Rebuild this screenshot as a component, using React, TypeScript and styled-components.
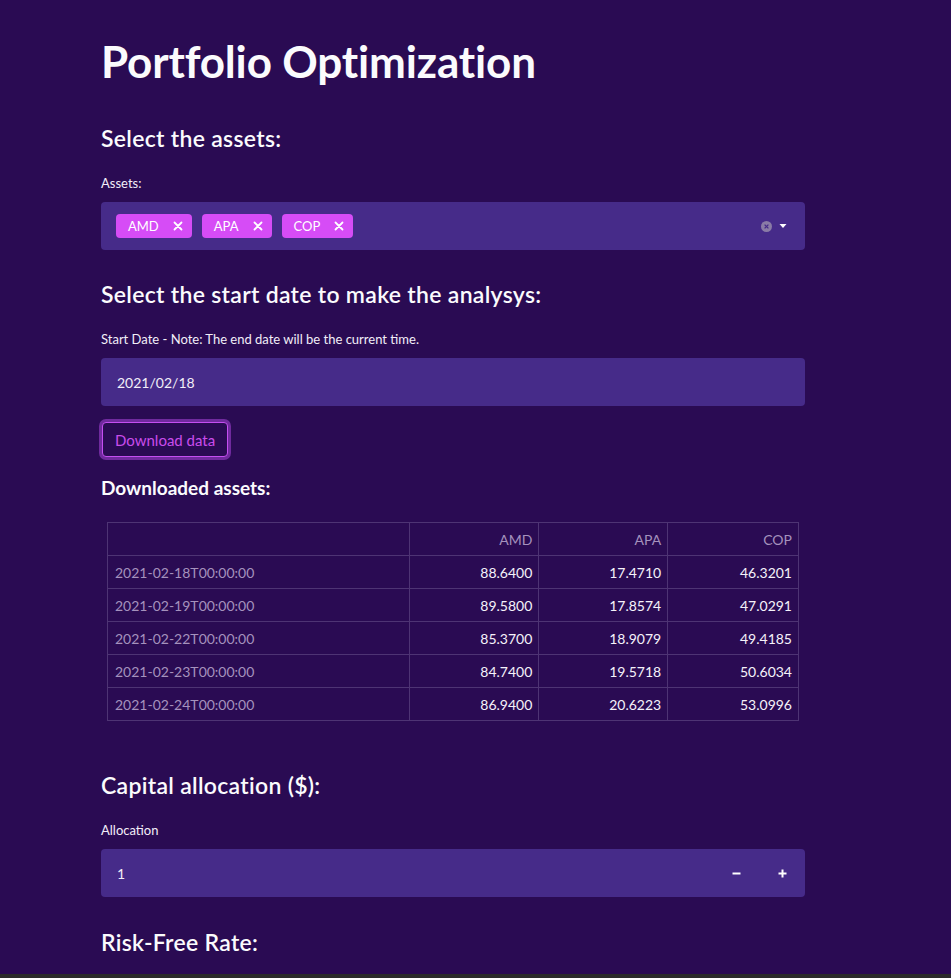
import React from "react";
import styled, { createGlobalStyle } from "styled-components";

const GlobalStyle = createGlobalStyle`
  html, body { margin: 0; padding: 0; background: #2a0b53; }
  body { font-family: Lato, "Noto Sans", sans-serif; color: #fafafa; }
  * { box-sizing: border-box; }
`;

const Page = styled.div`
  height: 100vh;
  display: flex;
  flex-direction: column;
  overflow: hidden;
  background: #2a0b53;
`;

const Main = styled.main`
  flex: 1;
  overflow: hidden;
  padding-left: 101px;
`;

const Block = styled.div`
  width: 704px;
  display: flex;
  flex-direction: column;
`;

const BottomStrip = styled.div`
  height: 4px;
  flex: none;
  background: #2b2b2b;
`;

const Title = styled.h1`
  margin: 33px 0 0;
  font-size: 44px;
  line-height: 56px;
  font-weight: 700;
  letter-spacing: -0.15px;
  color: #fbfbfd;
`;

const Heading = styled.h3<{ $top: number }>`
  margin: ${(p) => p.$top}px 0 0;
  font-size: 23px;
  line-height: 30px;
  font-weight: 600;
  letter-spacing: 0.3px;
  color: #fbfbfd;
`;

const SubHeading = styled.h4<{ $top: number }>`
  margin: ${(p) => p.$top}px 0 0;
  font-size: 19px;
  line-height: 26px;
  font-weight: 700;
  color: #fbfbfd;
`;

const Label = styled.label<{ $top: number }>`
  display: block;
  margin: ${(p) => p.$top}px 0 0;
  font-size: 13px;
  line-height: 18px;
  color: #f2eef8;
`;

const Field = styled.div<{ $top: number }>`
  margin-top: ${(p) => p.$top}px;
  height: 48px;
  border-radius: 4px;
  background: #462b89;
  display: flex;
  align-items: center;
  padding: 0 16px;
  font-size: 14px;
  color: #f2eef8;
`;

const Tags = styled.div`
  display: flex;
  gap: 10px;
  flex: 1;
  margin-left: -1px;
`;

const Tag = styled.span`
  height: 24px;
  display: inline-flex;
  align-items: center;
  gap: 14px;
  padding: 0 9px 0 12px;
  background: #d64cf6;
  border-radius: 4px;
  font-size: 13px;
  color: #ffffff;
`;

const Controls = styled.div`
  display: flex;
  align-items: center;
  gap: 7px;
  margin-right: 2px;
`;

const Value = styled.span`
  flex: 1;
`;

const Stepper = styled.div`
  display: flex;
  align-items: center;
  gap: 37px;
  margin-right: 2px;
`;

const Button = styled.button`
  margin-top: 16px;
  align-self: flex-start;
  height: 35px;
  padding: 0 12px;
  background: #2a0b53;
  border: 1px solid #c44ff0;
  border-radius: 4px;
  box-shadow: 0 0 0 3px rgba(170, 70, 220, 0.55);
  color: #c94ceb;
  font-family: Lato, sans-serif;
  font-size: 15px;
  margin-left: 1px;
`;

const Table = styled.table<{ $top: number }>`
  margin: ${(p) => p.$top}px 0 0 6px;
  width: 692px;
  border-collapse: collapse;
  font-size: 14px;
`;

const Col = styled.col<{ $w: number }>`
  width: ${(p) => p.$w}px;
`;

const Cell = styled.td<{ $head?: boolean; $index?: boolean }>`
  height: 33px;
  padding: 0 6px 0 7px;
  border: 1px solid #4e3474;
  text-align: ${(p) => (p.$index ? "left" : "right")};
  color: ${(p) => (p.$head || p.$index ? "#a592bd" : "#f5f2fa")};
  font-weight: 400;
  white-space: nowrap;
`;

const X = () => (
  <svg width="10" height="10" viewBox="0 0 10 10">
    <path d="M1.5 1.5 L8.5 8.5 M8.5 1.5 L1.5 8.5" stroke="#fff" strokeWidth="1.8" strokeLinecap="round" />
  </svg>
);

const ClearIcon = () => (
  <svg width="11" height="11" viewBox="0 0 11 11">
    <circle cx="5.5" cy="5.5" r="5.5" fill="#8a7ba6" />
    <path d="M3.6 3.6 L7.4 7.4 M7.4 3.6 L3.6 7.4" stroke="#462b89" strokeWidth="1.3" />
  </svg>
);

const Caret = () => (
  <svg width="8" height="6" viewBox="0 0 8 6">
    <path d="M0.5 1 L7.5 1 L4 5 Z" fill="#fff" />
  </svg>
);

const Minus = () => (
  <svg width="9" height="9" viewBox="0 0 9 9">
    <path d="M0.5 4.5 H8.5" stroke="#fff" strokeWidth="2" />
  </svg>
);

const Plus = () => (
  <svg width="9" height="9" viewBox="0 0 9 9">
    <path d="M0.5 4.5 H8.5 M4.5 0.5 V8.5" stroke="#fff" strokeWidth="2" />
  </svg>
);

const rows: [string, string, string, string][] = [
  ["2021-02-18T00:00:00", "88.6400", "17.4710", "46.3201"],
  ["2021-02-19T00:00:00", "89.5800", "17.8574", "47.0291"],
  ["2021-02-22T00:00:00", "85.3700", "18.9079", "49.4185"],
  ["2021-02-23T00:00:00", "84.7400", "19.5718", "50.6034"],
  ["2021-02-24T00:00:00", "86.9400", "20.6223", "53.0996"],
];

export default function App() {
  return (
    <>
      <GlobalStyle />
      <Page>
        <Main>
          <Block>
            <Title>Portfolio Optimization</Title>
            <Heading $top={34}>Select the assets:</Heading>
            <Label $top={21}>Assets:</Label>
            <Field $top={10}>
              <Tags>
                {["AMD", "APA", "COP"].map((t) => (
                  <Tag key={t}>
                    {t}
                    <X />
                  </Tag>
                ))}
              </Tags>
              <Controls>
                <ClearIcon />
                <Caret />
              </Controls>
            </Field>
            <Heading $top={29}>Select the start date to make the analysys:</Heading>
            <Label $top={21}>Start Date - Note: The end date will be the current time.</Label>
            <Field $top={10}>
              <Value>2021/02/18</Value>
            </Field>
            <Button>Download data</Button>
            <SubHeading $top={18}>Downloaded assets:</SubHeading>
            <Table $top={21}>
              <colgroup>
                <Col $w={302} />
                <Col $w={130} />
                <Col $w={129} />
                <Col $w={131} />
              </colgroup>
              <thead>
                <tr>
                  <Cell as="th" $head></Cell>
                  <Cell as="th" $head>AMD</Cell>
                  <Cell as="th" $head>APA</Cell>
                  <Cell as="th" $head>COP</Cell>
                </tr>
              </thead>
              <tbody>
                {rows.map((r) => (
                  <tr key={r[0]}>
                    <Cell $index>{r[0]}</Cell>
                    <Cell>{r[1]}</Cell>
                    <Cell>{r[2]}</Cell>
                    <Cell>{r[3]}</Cell>
                  </tr>
                ))}
              </tbody>
            </Table>
            <Heading $top={49}>Capital allocation ($):</Heading>
            <Label $top={21}>Allocation</Label>
            <Field $top={10}>
              <Value>1</Value>
              <Stepper>
                <Minus />
                <Plus />
              </Stepper>
            </Field>
            <Heading $top={30}>Risk-Free Rate:</Heading>
          </Block>
        </Main>
        <BottomStrip />
      </Page>
    </>
  );
}
